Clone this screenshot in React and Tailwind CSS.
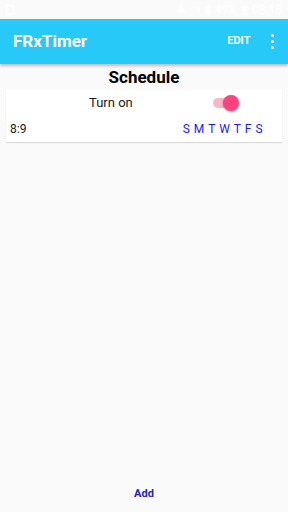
import React from 'react';

const days = ['S', 'M', 'T', 'W', 'T', 'F', 'S'];

const App = () => {
  return (
    <div className="w-[288px] h-[512px] bg-[#fafafa] flex flex-col font-['Roboto',sans-serif] overflow-hidden">
      <div className="h-[19px] bg-[#fafafa] flex items-center justify-between px-[6px] text-white text-[12px]">
        <div className="w-[8px] h-[10px] border border-white" />
        <div className="flex items-center gap-[4px]">
          <span>✱</span>
          <span>◠</span>
          <span>▮</span>
          <span>49%</span>
          <span>▮</span>
          <span>08:15</span>
        </div>
      </div>

      <div className="h-[45px] bg-[#26c9f7] flex items-center justify-between pl-[13px] pr-[14px] shadow-[0_2px_3px_rgba(0,0,0,0.25)] z-10">
        <span className="text-white text-[17px] font-bold">FRxTimer</span>
        <div className="flex items-center gap-[20px]">
          <span className="text-white text-[11px] font-bold">EDIT</span>
          <div className="flex flex-col gap-[2.5px]">
            <span className="w-[3.5px] h-[3.5px] rounded-full bg-white" />
            <span className="w-[3.5px] h-[3.5px] rounded-full bg-white" />
            <span className="w-[3.5px] h-[3.5px] rounded-full bg-white" />
          </div>
        </div>
      </div>

      <h1 className="text-center text-[17px] font-bold text-black mt-[2px] leading-[22px]">Schedule</h1>

      <div className="mx-[6px] mt-[2px] bg-white shadow-[0_1px_1px_rgba(0,0,0,0.12)] pt-[3px] pb-[4px]">
        <div className="flex items-center h-[20px]">
          <span className="ml-[83px] text-[13px] text-[#202020]">Turn on</span>
          <div className="relative ml-[80px] w-[26px] h-[20px] flex items-center">
            <div className="w-[24px] h-[10px] rounded-full bg-[#fbb6cc]" />
            <div className="absolute left-[10px] top-[2px] w-[16px] h-[16px] rounded-full bg-[#ff4081] shadow-[0_1px_2px_rgba(0,0,0,0.35)]" />
          </div>
        </div>
        <div className="flex items-center justify-between mt-[7px] pl-[4px] pr-[19px] h-[18px]">
          <span className="text-[12px] text-[#202020]">8:9</span>
          <div className="flex gap-[3.4px] text-[12px] text-[#1a1aff] tracking-[0.5px]">
            {days.map((d, i) => (
              <span key={i}>{d}</span>
            ))}
          </div>
        </div>
      </div>

      <div className="flex-1" />
      <div className="text-center text-[11px] font-bold text-[#2121c4] mb-[10px]">Add</div>
    </div>
  );
};

export default App;
